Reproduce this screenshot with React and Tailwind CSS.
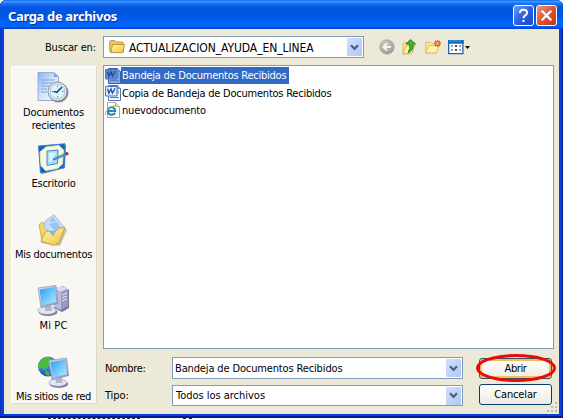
import React from "react";

function Defs() {
  return (
    <svg className="absolute h-0 w-0" aria-hidden="true">
      <defs>
        <linearGradient id="screen" x1="0" y1="0" x2="1" y2="1">
          <stop offset="0" stopColor="#2f9bea" />
          <stop offset=".5" stopColor="#6cc8fb" />
          <stop offset="1" stopColor="#b4ecff" />
        </linearGradient>
        <linearGradient id="folder" x1="0" y1="0" x2="1" y2="1">
          <stop offset="0" stopColor="#fff6b0" />
          <stop offset="1" stopColor="#f0c23c" />
        </linearGradient>
        <linearGradient id="paper" x1="0" y1="0" x2="1" y2="1">
          <stop offset="0" stopColor="#86b0ee" />
          <stop offset=".5" stopColor="#d5e6fb" />
          <stop offset="1" stopColor="#f4f9ff" />
        </linearGradient>
        <linearGradient id="metal" x1="0" y1="0" x2="1" y2="1">
          <stop offset="0" stopColor="#e8e9f4" />
          <stop offset="1" stopColor="#8386b0" />
        </linearGradient>
        <radialGradient id="globe" cx=".4" cy=".3" r=".8">
          <stop offset="0" stopColor="#5bb5f5" />
          <stop offset="1" stopColor="#0b3fae" />
        </radialGradient>
        <radialGradient id="gray" cx=".4" cy=".3" r=".7">
          <stop offset="0" stopColor="#cfcfca" />
          <stop offset="1" stopColor="#9c9c98" />
        </radialGradient>
      </defs>
    </svg>
  );
}

const RecentIcon = () => (
  <svg className="block h-8 w-8" viewBox="0 0 32 32">
    <path d="M2 1h16l4 4v24H2z" fill="#8f9ab5" opacity=".5" />
    <path d="M1 .5h16l4.500 4.500v23.500H1z" fill="url(#paper)" stroke="#7b9cd0" strokeWidth=".7" />
    <path d="M17 .5V5h4.500z" fill="#7aa6e3" />
    <path d="M4 8h14M4 11h13M4 14h8M4 17h6M4 20h6" stroke="#7ea6dc" strokeWidth="1" />
    <ellipse cx="21.500" cy="20.500" rx="10" ry="10" fill="#7d8795" />
    <circle cx="20.500" cy="19.500" r="9.500" fill="#dfe8ee" stroke="#8794a2" />
    <circle cx="20.500" cy="19.500" r="7.300" fill="#dcf6ff" stroke="#a6bac6" strokeWidth=".8" />
    <path d="M20.500 13.500v1.500M20.500 24v1.500M14.500 19.500H16M25 19.500h1.500" stroke="#5196c5" />
    <path d="M25 15l-5 5M16.500 19.500l4.500 1" stroke="#174f78" strokeWidth="1.700" />
  </svg>
);

const DesktopIcon = () => (
  <svg className="block h-8 w-8" viewBox="0 0 32 32">
    <path d="M3 4.500L29 2l-1 23L5 31z" fill="#7184a5" />
    <path d="M1.500 3L28 .8l-1 24L3.500 30z" fill="#1261bd" stroke="#397fc8" />
    <path d="M9 4l13-1.500 4.500 4.500-1 14-5 4.500-12 2-4.500-5L3 9z" fill="#f8f9db" stroke="#dce8ca" />
    <path d="M10 8l11-1-.5 13.500L10 22.500z" fill="#a9dcfa" stroke="#3f8ad0" />
    <path d="M12 10l7-.5-5 9-2 .5z" fill="#d8f2ff" />
    <path d="M16 16l12-5.500 1.500 1.500L17 17z" fill="#67a9dd" stroke="#2468a5" strokeWidth=".7" />
    <path d="M28 10l2.500-1.200 1.300 2.700-2.600 1z" fill="#a32a3f" />
  </svg>
);

const DocumentsIcon = () => (
  <svg className="block h-8 w-8" viewBox="0 0 32 32">
    <path d="M4 12v17l19 3 7-16-8-7z" fill="#99906a" opacity=".5" />
    <path d="M2 10.500l3-2.500 4 3 14 3-2 16-16-3z" fill="#f6d661" stroke="#c49c35" strokeWidth=".7" />
    <path d="M8 7L17 .7 27 13l-9 9L7 14z" fill="#c5dcfa" stroke="#9bb4da" strokeWidth=".8" />
    <path d="M15 3l4 4-6 1zM12 10l8-2 3 5-6 3z" fill="#8cb5f0" opacity=".7" />
    <path d="M4 27l5-10 8 1 5-4 6-.5-5.500 14.500-6 3.500z" fill="url(#folder)" stroke="#b8943a" strokeWidth=".8" />
    <path d="M12 17.500l8-2-4 7z" fill="#7fb0ec" opacity=".9" />
  </svg>
);

function Monitor() {
  return (
    <g>
      <ellipse cx="11" cy="27" rx="9.500" ry="4" fill="#777a9c" />
      <ellipse cx="10" cy="25.500" rx="9" ry="3.800" fill="#e4e6f4" stroke="#a0a2bf" strokeWidth=".7" />
      <path d="M8 20h6l1 6H8z" fill="#b2b4d0" />
      <path d="M1 3l18-2.500 2 18L4 22.500z" fill="url(#metal)" stroke="#9396b7" strokeWidth=".7" />
      <path d="M2.500 4.500l15-2.200L19.500 17 5 20.500z" fill="url(#screen)" />
    </g>
  );
}

const ComputerIcon = () => (
  <svg className="block h-8 w-8" viewBox="0 0 32 32">
    <path d="M17 4l9-3 6 4v18l-7 4-8-4z" fill="#74769c" />
    <path d="M17 4l8-3 6 3-7 3z" fill="#d9daf0" />
    <path d="M17 4l7 3v18l-7-3z" fill="#b8bbdb" />
    <path d="M24 7l7-3v17l-7 4z" fill="#9699c4" />
    <path d="M25 10l5-2M25 13l5-2M25 16l5-2" stroke="#e5e5f5" />
    <Monitor />
  </svg>
);

const NetworkIcon = () => (
  <svg className="block h-8 w-8" viewBox="0 0 32 32">
    <circle cx="11" cy="10.500" r="10" fill="url(#globe)" />
    <path d="M3 5q4-4 8-4l4 1-3 3 2 3-4 2-2 4-3-2-3 1-1-4zM8 15l4 1 1 4-4-1zM15 3l4 3-3 2z" fill="#4dbb36" />
    <g transform="translate(11 1.500) scale(.98)"><Monitor /></g>
  </svg>
);

const FolderIcon = () => (
  <svg className="block h-4 w-4 shrink-0" viewBox="0 0 16 16">
    <path d="M.7 3.500q0-2 1.500-2h3.500L7.200 3h6q1.300 0 1.300 1.500V13H1.500q-.8 0-.8-1z" fill="#f0c94f" stroke="#b08d2e" strokeWidth=".8" />
    <path d="M3.500 5.500h12L14 13q-.2.700-1 .7H2z" fill="url(#folder)" stroke="#b18a24" strokeWidth=".8" />
  </svg>
);

const WordIcon = ({ selected }) => (
  <svg className="block h-4 w-4 shrink-0" viewBox="0 0 16 16">
    <path d="M3.500.5h9l3 3v12h-12z" fill={selected ? "#86a9dd" : "#f8fbff"} stroke={selected ? "#3260ad" : "#5476af"} />
    <path d="M12.500.5v3h3" fill="#a9bee2" stroke="#5476af" strokeWidth=".8" />
    <path d="M12 6h2M12 8h2M5 12.500h9" stroke="#5c7fb9" />
    <path d="M.5 1.500h11.500v9.500H.5z" fill={selected ? "#5f89cd" : "#e4eefe"} stroke="#4a76bd" />
    <path d="M2.500 3.800l1.400 4.400 2.100-4.200 1.400 4.200 2.600-4.800" fill="none" stroke={selected ? "#1d4a9c" : "#1b4ca7"} strokeWidth="1.300" />
  </svg>
);

const WebIcon = () => (
  <svg className="block h-4 w-4 shrink-0" viewBox="0 0 16 16">
    <path d="M2.500.5h8l4 4v11h-12z" fill="#fffef8" stroke="#9ca495" strokeWidth=".9" />
    <path d="M10.500.5v4h4" fill="#e3e2cf" stroke="#9ca495" strokeWidth=".8" />
    <path d="M3 9h7.200c.2-5-7.500-5-7.300.3.200 4.500 5.800 4.300 7.200 1.500" fill="none" stroke="#2384c5" strokeWidth="2" />
    <path d="M.8 13c-2-2.500 5-10 10.500-9.500" fill="none" stroke="#d9a62d" />
  </svg>
);

function DropArrow() {
  return (
    <span className="flex h-[18px] w-[15px] shrink-0 items-center justify-center rounded-[1px] bg-linear-to-br from-[#d2e0fe] to-[#afc6f5]">
      <svg className="block h-[7px] w-[9px]" viewBox="0 0 9 7"><path d="M1 1.300l3.500 3.500L8 1.300" fill="none" stroke="#4d6185" strokeWidth="2.300" /></svg>
    </span>
  );
}

const places = [
  { icon: RecentIcon, lines: [["Documentos", "tracking-[-0.16px]"], ["recientes", "tracking-[-0.24px]"]], height: "h-[71px]" },
  { icon: DesktopIcon, lines: [["Escritorio", "tracking-[-0.25px]"]], height: "h-[71px]" },
  { icon: DocumentsIcon, lines: [["Mis documentos", "tracking-[-0.25px]"]], height: "h-[71px]" },
  { icon: ComputerIcon, lines: [["Mi PC", "tracking-[0.1px]"]], height: "h-[71px]" },
  { icon: NetworkIcon, lines: [["Mis sitios de red", "tracking-[-0.3px]"]], height: "h-[50px]" },
];

function TitleBar() {
  return (
    <header className="flex h-[29px] shrink-0 items-center rounded-t-[6px] bg-[linear-gradient(180deg,#0868e8_0%,#3c97ff_5%,#1b73f5_12%,#0356df_25%,#0054e3_52%,#0065fb_78%,#0063f6_91%,#003dcb_100%)] pl-2 pr-[6px] pt-[2px]">
      <span className="grow whitespace-nowrap font-['Noto_Sans'] text-[13px] font-bold leading-4 tracking-[-0.36px] text-white [text-shadow:1px_1px_#0a338f]">Carga de archivos</span>
      <div className="flex gap-[2px]">
        <button className="flex h-[21px] w-[21px] items-center justify-center rounded-[3px] border border-white bg-linear-to-br from-[#6d9bfa] via-[#2d62e2] to-[#1748c8]">
          <svg className="block h-[15px] w-[13px]" viewBox="0 0 13 15"><path d="M3 5q0-3.300 3.600-3.300T10 4.800q0 1.600-1.700 2.600T6.500 10.200M6.500 12v2" fill="none" stroke="#fff" strokeWidth="2" /></svg>
        </button>
        <button className="flex h-[21px] w-[21px] items-center justify-center rounded-[3px] border border-white bg-linear-to-br from-[#ee9479] via-[#e15230] to-[#c13510]">
          <svg className="block h-[13px] w-[13px]" viewBox="0 0 13 13"><path d="M1.700 1.700l9.600 9.600M11.300 1.700L1.700 11.300" stroke="#fff" strokeWidth="2.300" /></svg>
        </button>
      </div>
    </header>
  );
}

function Toolbar() {
  return (
    <div className="flex h-9 shrink-0 items-start pt-[7px]">
      <span className="w-[99px] pl-[41px] pt-px text-[11px] leading-[22px] tracking-[-0.18px]">Buscar en:</span>
      <div className="flex h-[22px] w-[261px] items-center border border-[#7f9db9] bg-white pl-[5px] pr-px">
        <FolderIcon />
        <span className="grow whitespace-nowrap pl-1 pt-px text-[12px] leading-4 tracking-[-0.07px]">ACTUALIZACION_AYUDA_EN_LINEA</span>
        <DropArrow />
      </div>
      <div className="flex h-[22px] items-center pl-[15px]">
        <svg className="h-4 w-4" viewBox="0 0 16 16"><circle cx="8" cy="8" r="7.200" fill="url(#gray)" stroke="#a1a19d" strokeWidth=".7" /><path d="M12 8H4.500M8 4.500L4.500 8 8 11.500" fill="none" stroke="#f5f5ef" strokeWidth="1.900" /></svg>
        <svg className="ml-[7px] h-4 w-4" viewBox="0 0 16 16"><path d="M1 4l4-1 1 1h5v9l-3 2H1z" fill="#f9e184" stroke="#d7b44e" strokeWidth=".8" /><path d="M1 15L4 7l9-1-3 8z" fill="#fff2a1" stroke="#d1ab43" strokeWidth=".8" /><path d="M4 5L8.500.5 13.500 5H11q1 6.500-5 8.500 3-4 1.500-8.500z" fill="#42b735" stroke="#16761b" strokeWidth=".9" /></svg>
        <svg className="ml-[7px] h-4 w-4" viewBox="0 0 16 16"><path d="M.7 3h4.500L6.500 4.500h5V14H.7z" fill="#ffe68e" stroke="#dcb155" strokeWidth=".8" /><path d="M.7 14l3-7.500H14L11.500 14z" fill="#fff2ad" stroke="#dcae50" strokeWidth=".8" /><path d="M12.500 1v7M9 4.500h7M10 2l5 5M15 2l-5 5" stroke="#e8541d" strokeWidth="1.300" /><circle cx="12.500" cy="4.500" r="1.200" fill="#ffd66f" /></svg>
        <svg className="ml-[7px] h-4 w-4" viewBox="0 0 16 16"><path d="M.7 1.700h14.200v13H.7z" fill="#fff" stroke="#1466b5" strokeWidth="1.300" /><path d="M0 1h15.500v3.700H0z" fill="#1263bb" /><path d="M1 2h12" stroke="#4ba0ee" /><path d="M3 6h2v2H3zM11 10h2v2h-2z" fill="#8fb07f" /><path d="M7 6h2v2H7zM7 10h2v2H7z" fill="#285b98" /><path d="M11 6h2v2h-2zM3 10h2v2H3z" fill="#cf8a5c" /></svg>
        <svg className="ml-[1px] h-[3px] w-[5px]" viewBox="0 0 5 3"><path d="M0 0h5L2.500 3z" fill="#000" /></svg>
      </div>
    </div>
  );
}

function Places() {
  return (
    <nav className="flex h-[338px] w-[86px] flex-col border border-[#dedac8] border-l-white border-t-white bg-[#f8f7f2] pt-[5px]">
      {places.map(({ icon: Icon, lines, height }) => (
        <div key={lines[0][0]} className={"flex shrink-0 flex-col items-center " + height}>
          <div className="pr-[3px]"><Icon /></div>
          <div className="pr-px pt-[2px]">
            {lines.map(([text, tracking]) => (
              <div key={text} className={"whitespace-nowrap text-center text-[11px] leading-[13px] " + tracking}>{text}</div>
            ))}
          </div>
        </div>
      ))}
    </nav>
  );
}

function FileList() {
  return (
    <div className="h-[284px] w-[451px] border border-[#7f9db9] bg-white pl-px pt-px text-[11px] leading-[17px]">
      <div className="flex h-[17px] items-center"><WordIcon selected /><span className="h-[17px] w-[168px] whitespace-nowrap bg-[#316ac5] pl-px pt-px leading-4 tracking-[-0.24px] text-white">Bandeja de Documentos Recibidos</span></div>
      <div className="flex h-[17px] items-center"><WordIcon /><span className="whitespace-nowrap pl-px pt-px tracking-[-0.23px]">Copia de Bandeja de Documentos Recibidos</span></div>
      <div className="flex h-[17px] items-center"><WebIcon /><span className="whitespace-nowrap pl-px pt-px tracking-[-0.2px]">nuevodocumento</span></div>
    </div>
  );
}

function Fields() {
  return (
    <div className="flex pt-2">
      <div className="flex w-[360px] flex-col gap-[6px]">
        <div className="flex h-[22px] items-center">
          <span className="w-[69px] pl-[2px] pt-[2px] text-[11px] tracking-[-0.3px]">Nombre:</span>
          <div className="flex h-[22px] w-[291px] items-center border border-[#7f9db9] bg-white pl-[2px] pr-px"><span className="grow pt-[2px] text-[11px] tracking-[-0.14px]">Bandeja de Documentos Recibidos</span><DropArrow /></div>
        </div>
        <div className="flex h-[21px] items-center">
          <span className="w-[69px] pl-[2px] pt-px text-[11px] tracking-[-0.1px]">Tipo:</span>
          <div className="flex h-[21px] w-[291px] items-center border border-[#7f9db9] bg-white pl-[3px] pr-px"><span className="grow pt-[2px] text-[11px] tracking-[-0.02px]">Todos los archivos</span><DropArrow /></div>
        </div>
      </div>
      <div className="flex flex-col gap-[5px] pl-4 pt-px">
        <button className="relative h-[21px] w-[73px] rounded-[3px] border border-[#36526b] bg-linear-to-b from-[#fffef9] to-[#efede5] text-[11px] leading-[19px] tracking-[-0.4px] shadow-[inset_0_0_0_2px_#f5bd54]">
          Abrir
          <svg className="absolute -left-[5px] -top-[6px] h-[30px] w-[82px]" viewBox="0 0 82 30"><ellipse cx="41" cy="15" rx="38.500" ry="12.500" fill="none" stroke="#e60b0f" strokeWidth="3" /></svg>
        </button>
        <button className="h-[21px] w-[73px] rounded-[3px] border border-[#0c3c69] bg-linear-to-b from-white to-[#ece9e1] text-[11px] leading-[19px] tracking-[-0.15px]">Cancelar</button>
      </div>
    </div>
  );
}

export default function App() {
  return (
    <main className="relative flex h-[419px] w-[563px] flex-col overflow-hidden bg-white font-['DejaVu_Sans_Condensed','DejaVu_Sans',sans-serif] text-black">
      <Defs />
      <section className="flex h-[418px] shrink-0 flex-col rounded-t-[6px] bg-[#0a3fd8] shadow-[inset_-1px_-2px_#001c98,inset_1px_0_#0831c4]">
        <TitleBar />
        <div className="mx-1 flex h-[385px] flex-col bg-[#ece9d8]">
          <Toolbar />
          <div className="flex">
            <div className="w-[99px] pl-[7px] pt-px"><Places /></div>
            <div><FileList /><Fields /></div>
          </div>
        </div>
      </section>
      <svg className="absolute left-[546px] top-[401px] h-3 w-3" viewBox="0 0 12 12"><path d="M9 1h2v2H9zM5 5h2v2H5zM9 5h2v2H9zM1 9h2v2H1zM5 9h2v2H5zM9 9h2v2H9z" fill="#bdb9a5" /></svg>
      <div className="flex pl-12">
        <div className="w-[92px] border-t border-dashed border-[#222]" />
        <div className="ml-[43px] w-[9px] border-t border-dashed border-[#222]" />
      </div>
    </main>
  );
}
